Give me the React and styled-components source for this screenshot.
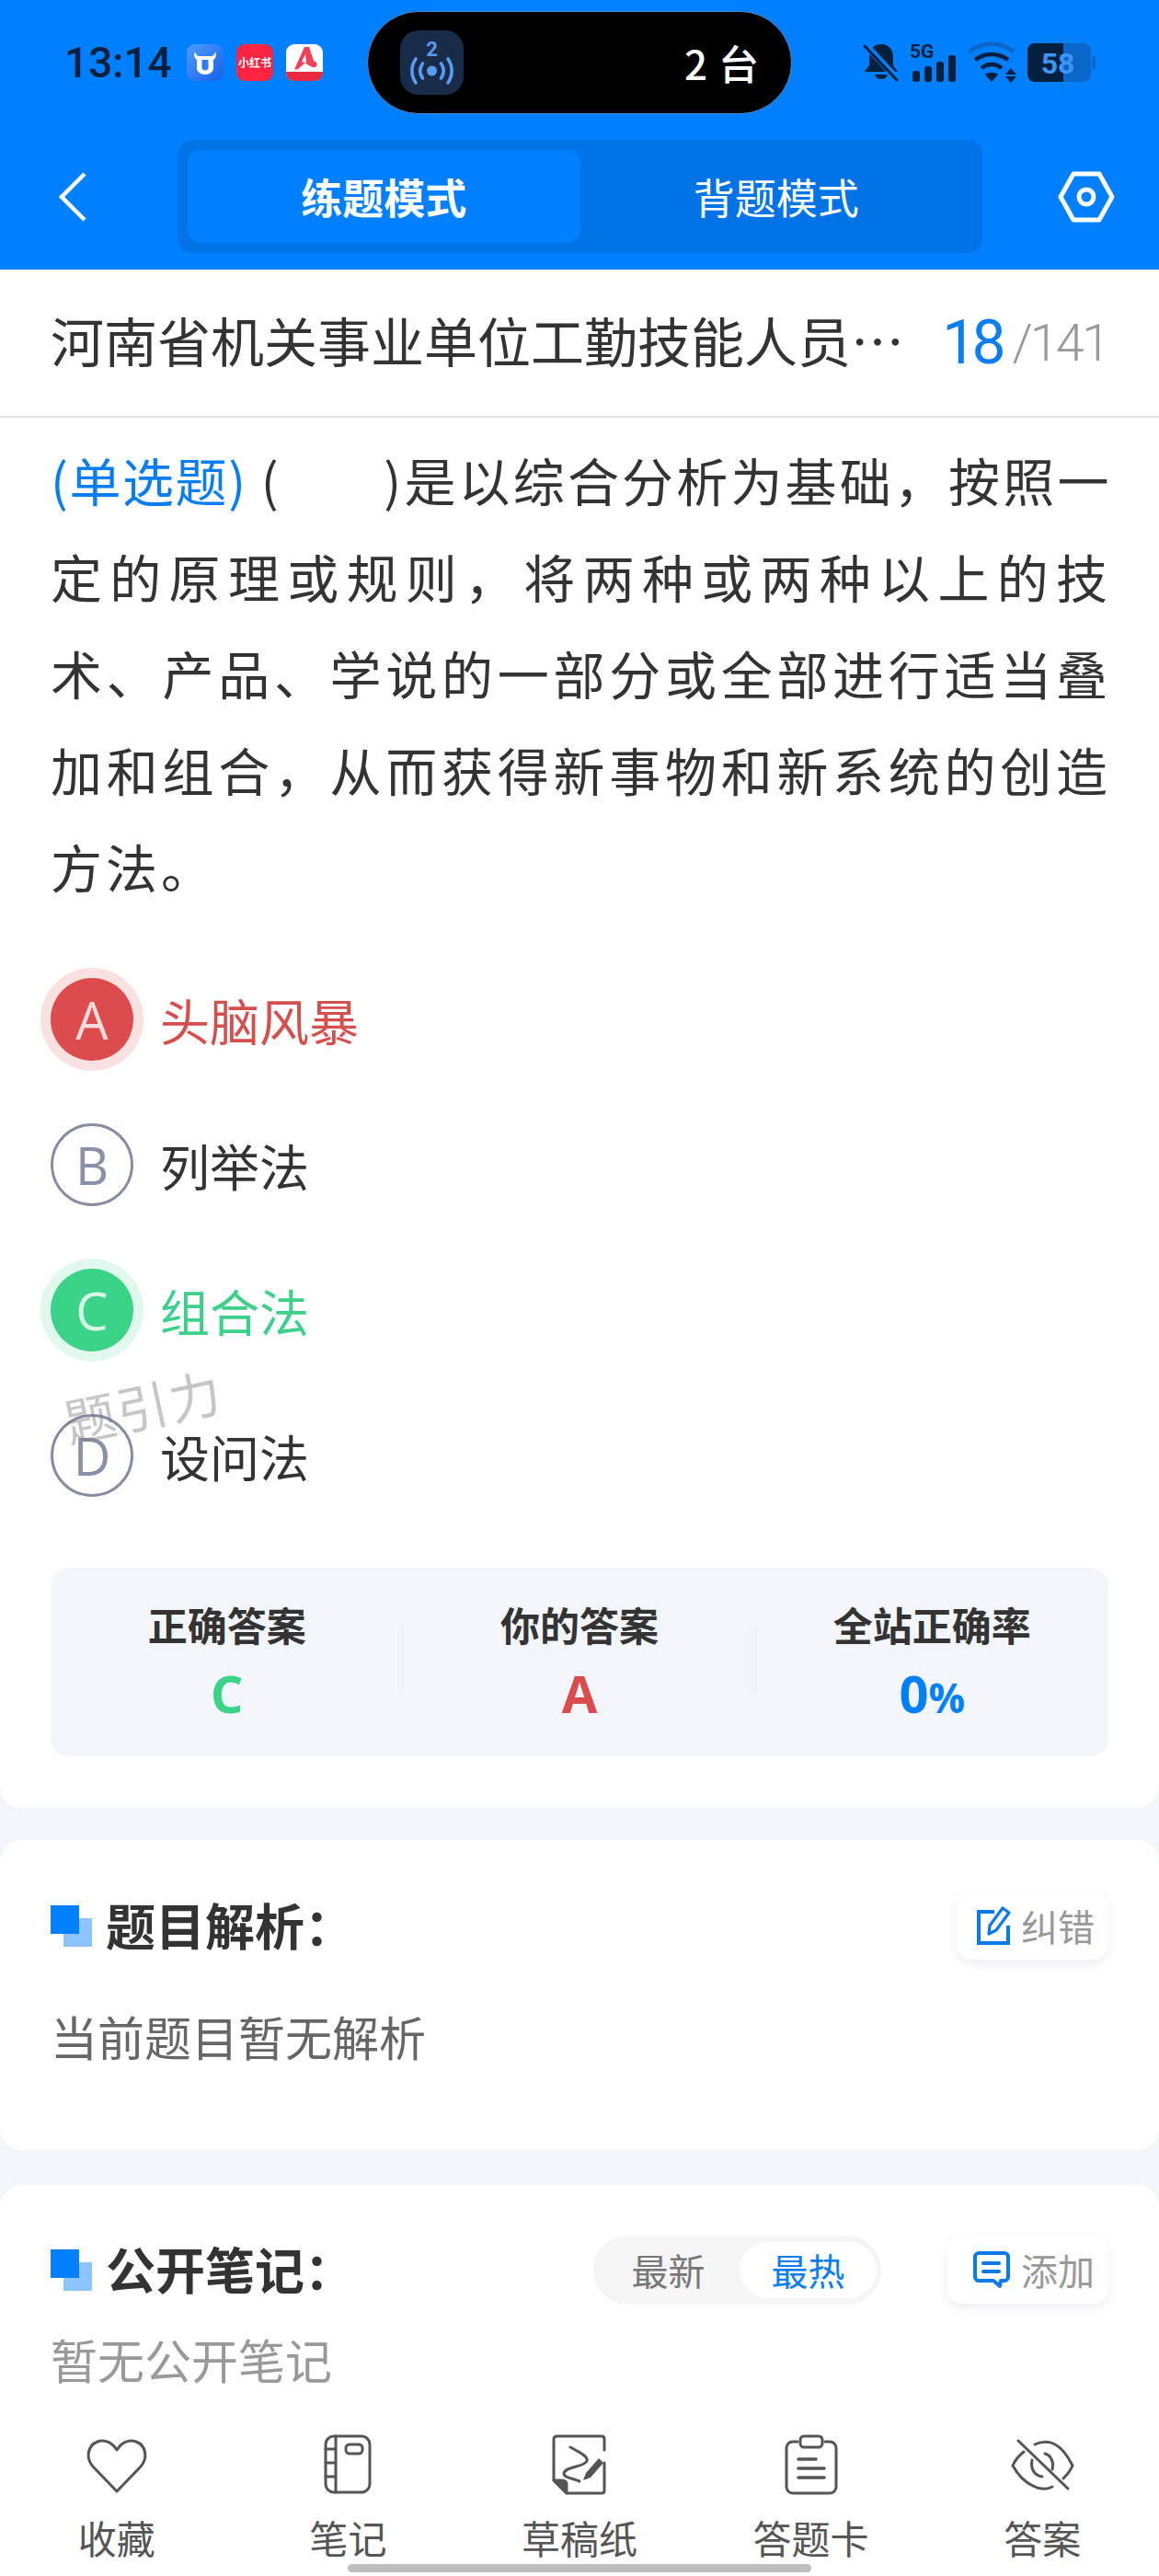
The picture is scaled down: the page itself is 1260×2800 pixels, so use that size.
import React from 'react';
import styled, { createGlobalStyle } from 'styled-components';

const CJK = `"Noto Sans CJK SC", "Noto Sans", sans-serif`;

const GlobalStyle = createGlobalStyle`
    html, body {
        margin: 0;
        padding: 0;
        background: #f2f5f9;
    }
    * {
        box-sizing: border-box;
    }
`;

const Page = styled.div`
    width: 1260px;
    height: 2800px;
    display: flex;
    flex-direction: column;
    position: relative;
    overflow: hidden;
    background: #f2f5f9;
    font-family: ${CJK};
    color: #333;
`;

const BlueHeader = styled.header`
    height: 293px;
    flex: none;
    background: #0080ff;
    display: flex;
    flex-direction: column;
`;

const StatusBar = styled.div`
    height: 137px;
    padding: 12px 66px 0 70px;
    display: flex;
    align-items: flex-start;
`;

const StatusLeft = styled.div`
    width: 329px;
    height: 112px;
    display: flex;
    align-items: center;
`;

const Time = styled.div`
    width: 133px;
    font-family: Roboto, sans-serif;
    font-size: 46px;
    font-weight: 500;
    color: #04203f;
    line-height: 1;
`;

const AppIcons = styled.div`
    display: flex;
    gap: 14px;
`;

const AppIcon = styled.svg`
    width: 40px;
    height: 40px;
    display: block;
`;

const Island = styled.div`
    width: 462px;
    height: 112px;
    flex: none;
    background: #000;
    border: 1px solid #4f89c6;
    border-radius: 56px;
    padding: 0 35px 0 35px;
    display: flex;
    align-items: center;
    justify-content: space-between;
`;

const IslandBadge = styled.svg`
    width: 69px;
    height: 70px;
    display: block;
`;

const IslandText = styled.div`
    font-size: 44px;
    font-weight: 500;
    color: #fff;
    line-height: 1;
    word-spacing: 2px;
`;

const StatusRight = styled.div`
    flex: 1;
    height: 112px;
    padding-left: 77px;
    display: flex;
    align-items: center;
`;

const StatusIcons = styled.svg`
    width: 255px;
    height: 48px;
    display: block;
    flex: none;
`;

const NavBar = styled.div`
    height: 123px;
    margin-top: 15px;
    padding: 0 49px 0 64px;
    display: flex;
    align-items: center;
`;

const BackIcon = styled.svg`
    width: 30px;
    height: 54px;
    flex: none;
    margin-right: 99px;
`;

const ModeSwitch = styled.div`
    width: 875px;
    height: 123px;
    flex: none;
    background: #0073e6;
    border-radius: 16px;
    padding: 11px;
    display: flex;
`;

const ModeTab = styled.div`
    flex: 1;
    border-radius: 14px;
    display: flex;
    align-items: center;
    justify-content: center;
    color: #fff;
    font-size: 45px;
    font-weight: ${(p) => (p.$active ? 700 : 400)};
    background: ${(p) => (p.$active ? '#0080ff' : 'transparent')};
`;

const SettingIcon = styled.svg`
    width: 62px;
    height: 56px;
    flex: none;
    margin-left: 82px;
`;

const Scroll = styled.main`
    flex: 1;
    min-height: 0;
    overflow: hidden;
`;

const QuestionCard = styled.section`
    height: 1672px;
    background: #fff;
    border-radius: 0 0 24px 24px;
    display: flex;
    flex-direction: column;
`;

const TitleRow = styled.div`
    height: 161px;
    flex: none;
    border-bottom: 2px solid #e2e2e2;
    padding: 0 56px 5px 55px;
    display: flex;
    align-items: center;
    justify-content: space-between;
`;

const PaperTitle = styled.div`
    font-size: 58px;
    line-height: 1.2;
    color: #333;
    white-space: nowrap;
`;

const Counter = styled.div`
    display: flex;
    align-items: center;
    margin-top: 6px;
    font-family: Roboto, sans-serif;
    line-height: 1;
`;

const CounterNow = styled.span`
    font-size: 66px;
    letter-spacing: -5px;
    color: #0a7df0;
`;

const CounterAll = styled.span`
    font-size: 56px;
    font-weight: 300;
    letter-spacing: -3px;
    color: #999;
    margin-left: 12px;
`;

const QuestionText = styled.div`
    padding: 14px 52px 0 55px;
    font-size: 56px;
    line-height: 105px;
    letter-spacing: 4px;
    color: #333;
`;

const QuestionLine = styled.div`
    text-align: justify;
    text-align-last: ${(p) => (p.$last ? 'left' : 'justify')};
    white-space: nowrap;
    letter-spacing: ${(p) => p.$tracking || 4}px;
`;

const TypeTag = styled.span`
    color: #0a7df0;
    letter-spacing: 1px;
`;

const Blank = styled.span`
    display: inline-block;
    width: 112px;
`;

const OptionList = styled.div`
    margin-top: 70px;
    padding-left: 55px;
    display: flex;
    flex-direction: column;
    gap: 68px;
    position: relative;
`;

const OptionRow = styled.div`
    height: 90px;
    display: flex;
    align-items: center;
    gap: 29px;
    font-size: 54px;
    color: ${(p) => p.$color || '#333'};
`;

const OptionBall = styled.div`
    width: 90px;
    height: 90px;
    border-radius: 50%;
    flex: none;
    display: flex;
    align-items: center;
    justify-content: center;
    font-family: "Open Sans", sans-serif;
    font-size: 56px;
    line-height: 1;
    color: ${(p) => (p.$fill ? p.$tint : '#8a90a6')};
    background: ${(p) => p.$fill || '#fff'};
    border: ${(p) => (p.$fill ? 'none' : '3px solid #878ca3')};
    box-shadow: ${(p) => (p.$fill ? `0 0 0 11px ${p.$ring}` : 'none')};
`;

const Watermark = styled.div`
    position: absolute;
    left: 68px;
    top: 430px;
    font-size: 56px;
    line-height: 1.2;
    letter-spacing: 2px;
    color: rgba(120, 120, 120, 0.42);
    transform: rotate(-12deg);
    pointer-events: none;
`;

const ResultBox = styled.div`
    margin: 77px 55px 0;
    height: 205px;
    background: #f2f5f9;
    border-radius: 20px;
    padding-top: 29px;
    display: flex;
`;

const ResultCell = styled.div`
    flex: 1;
    height: 110px;
    display: flex;
    flex-direction: column;
    align-items: center;
    position: relative;
    & + &::before {
        content: "";
        position: absolute;
        left: -1px;
        top: 35px;
        height: 73px;
        width: 1px;
        background: #e6e9ed;
    }
`;

const ResultLabel = styled.div`
    font-size: 43px;
    font-weight: 700;
    line-height: 64px;
    color: #333;
`;

const ResultValue = styled.div`
    margin-top: 11px;
    font-family: "Open Sans", sans-serif;
    font-size: 56px;
    font-weight: 700;
    line-height: 64px;
    color: ${(p) => p.$color};
`;

const ResultUnit = styled.span`
    font-size: 44px;
`;

const SectionCard = styled.section`
    margin-top: ${(p) => p.$gap}px;
    height: ${(p) => p.$height}px;
    background: #fff;
    border-radius: 24px;
    padding: ${(p) => p.$top}px 55px 0;
`;

const SectionHead = styled.div`
    height: 74px;
    display: flex;
    align-items: center;
`;

const SquareMark = styled.div`
    width: 45px;
    height: 45px;
    flex: none;
    background: linear-gradient(#0080ff, #0080ff) 0 0 / 31px 31px no-repeat,
        linear-gradient(#8cc4ff, #8cc4ff) 14px 14px / 31px 31px no-repeat;
`;

const SectionTitle = styled.h2`
    margin: -3px 0 0 15px;
    font-size: 54px;
    font-weight: 700;
    line-height: 1;
    color: #333;
    flex: 1;
`;

const GhostButton = styled.div`
    height: 73px;
    width: ${(p) => p.$width}px;
    flex: none;
    border-radius: 16px;
    background: #fff;
    box-shadow: 0 4px 12px rgba(40, 60, 90, 0.09);
    padding-right: 15px;
    display: flex;
    align-items: center;
    justify-content: flex-end;
    gap: ${(p) => p.$iconGap}px;
    font-size: 40px;
    color: #999;
`;

const ButtonIcon = styled.svg`
    width: 42px;
    height: 44px;
    flex: none;
`;

const SortSwitch = styled.div`
    width: 313px;
    height: 75px;
    margin-right: 72px;
    flex: none;
    border-radius: 38px;
    background: #f5f5f5;
    padding: 7px 5px 7px 4px;
    display: flex;
    align-items: center;
`;

const SortTab = styled.div`
    height: 61px;
    width: ${(p) => p.$width}px;
    border-radius: 31px;
    display: flex;
    align-items: center;
    justify-content: center;
    font-size: 40px;
    color: ${(p) => (p.$active ? '#0a7df0' : '#777')};
    background: ${(p) => (p.$active ? '#fff' : 'transparent')};
`;

const BodyText = styled.p`
    margin: ${(p) => p.$top}px 0 0 0;
    font-size: 51px;
    line-height: 72px;
    color: ${(p) => p.$color};
`;

const TabBar = styled.nav`
    height: 180px;
    flex: none;
    background: #fff;
    padding: 0 1px;
    display: grid;
    grid-template-columns: repeat(5, 1fr);
`;

const TabItem = styled.div`
    display: flex;
    flex-direction: column;
    align-items: center;
    padding-top: 24px;
    font-size: 42px;
    line-height: 60px;
    color: #555;
`;

const TabIcon = styled.svg`
    width: 70px;
    height: 70px;
    display: block;
    margin-bottom: 14px;
    fill: none;
    stroke: #555;
    stroke-width: 3;
    stroke-linecap: round;
    stroke-linejoin: round;
`;

const HomeBar = styled.div`
    position: absolute;
    left: 378px;
    bottom: 4px;
    width: 504px;
    height: 9px;
    border-radius: 5px;
    background: #bfbfbf;
`;

const CowIcon = () => (
    <AppIcon viewBox="0 0 40 40">
        <defs>
            <linearGradient id="cow" x1="0" y1="0" x2="1" y2="1">
                <stop offset="0" stopColor="#4f9bff" />
                <stop offset="1" stopColor="#1660e8" />
            </linearGradient>
        </defs>
        <rect width="40" height="40" rx="9" fill="url(#cow)" />
        <path d="M9 8c.5 3 2 4.500 4 5h14c2-.5 3.500-2 4-5 1.500 3.500 1 7-2 9v9c0 4-4 7-9 7s-9-3-9-7v-9c-3-2-3.500-5.500-2-9z" fill="#fff" />
        <path d="M16.500 17h7v9c0 1.500-1.500 2.500-3.500 2.500s-3.500-1-3.500-2.500z" fill="#2f7df2" />
    </AppIcon>
);

const RedBookIcon = () => (
    <AppIcon viewBox="0 0 40 40">
        <rect width="40" height="40" rx="9" fill="#ff2442" />
        <text x="20" y="25" textAnchor="middle" fontSize="12" fontWeight="700" fill="#fff" fontFamily={CJK}>小红书</text>
    </AppIcon>
);

const RedAppIcon = () => (
    <AppIcon viewBox="0 0 40 40">
        <rect width="40" height="40" rx="9" fill="#fff" />
        <path d="M0 30h40v1c0 5-4 9-9 9H9c-5 0-9-4-9-9z" fill="#e8283f" />
        <path d="M20 3h5l5 15c3 1 4 3 3.500 5s-3 3-6 1.500l-7-4-8 7H9z" fill="#ee4258" />
        <path d="M21 11l-4 8 5 1.500z" fill="#fff" />
    </AppIcon>
);

const BroadcastBadge = () => (
    <IslandBadge viewBox="0 0 69 70">
        <rect width="69" height="70" rx="20" fill="#182c49" />
        <text x="34.500" y="28" textAnchor="middle" fontSize="22" fontWeight="700" fill="#5a9bf0" fontFamily="Roboto, sans-serif">2</text>
        <circle cx="34.500" cy="44" r="5.500" fill="#5a9bf0" />
        <g fill="none" stroke="#5a9bf0" strokeWidth="3.600" strokeLinecap="round">
            <path d="M24.500 36c-3.500 5-3.500 11 0 16" />
            <path d="M44.500 36c3.500 5 3.500 11 0 16" />
            <path d="M17 31c-5.500 8-5.500 18 0 26" />
            <path d="M52 31c5.500 8 5.500 18 0 26" />
        </g>
    </IslandBadge>
);

// bell, 5G bars, wifi, battery: one strip, same colour
const StatusStrip = () => (
    <StatusIcons viewBox="0 0 255 48">
        <g fill="#04203f">
            <path d="M20 4c8 0 13 6 13 14v9l5 7H2l5-7v-9C7 10 12 4 20 4z" />
            <path d="M13 37h14c-1 3.500-3.500 5-7 5s-6-1.500-7-5z" />
        </g>
        <path d="M3 5l34 36" stroke="#0080ff" strokeWidth="7" />
        <path d="M2 6l35 37" stroke="#04203f" strokeWidth="3" strokeLinecap="round" fill="none" />
        <text x="51" y="19" fontSize="21" fontWeight="700" fill="#04203f" fontFamily="Roboto, sans-serif">5G</text>
        <g fill="#04203f">
            <rect x="54" y="33" width="8" height="12" rx="3" />
            <rect x="67" y="28" width="8" height="17" rx="3" />
            <rect x="80" y="23" width="8" height="22" rx="3" />
            <rect x="93" y="16" width="8" height="29" rx="3" />
        </g>
        <g fill="none" strokeLinecap="butt">
            <path d="M116 12c14-11 34-11 48 0" stroke="#0a66c8" strokeWidth="4.500" />
            <path d="M122 21c11-8 25-8 36 0" stroke="#04203f" strokeWidth="4.500" />
            <path d="M129 30c7-5 15-5 22 0" stroke="#04203f" strokeWidth="4.500" />
        </g>
        <g fill="#04203f">
            <path d="M140 45l-7-8c4-3 10-3 14 0z" />
            <path d="M161 30l6 7h-12z" />
            <path d="M161 46l6-7h-12z" />
        </g>
        <rect x="179" y="3" width="69" height="42" rx="8" fill="#0a66c8" />
        <rect x="249" y="17" width="4" height="14" rx="2" fill="#0a66c8" />
        <path d="M187 3h31v42h-31a8 8 0 0 1-8-8V11a8 8 0 0 1 8-8z" fill="#04203f" />
        <text x="212" y="36" textAnchor="middle" fontSize="32" fontWeight="700" fill="#3d96f5" fontFamily="Roboto, sans-serif">58</text>
    </StatusIcons>
);

const EditIcon = () => (
    <ButtonIcon viewBox="0 0 42 44" fill="none" stroke="#0c7ae6" strokeWidth="4">
        <path d="M20 7H3v34h32V22" />
        <path d="M14 31l1-9L29 3l7 5-14 19z" strokeWidth="3.200" strokeLinejoin="round" />
    </ButtonIcon>
);

const CommentIcon = () => (
    <ButtonIcon viewBox="0 0 42 44" fill="none" stroke="#0c7ae6" strokeWidth="4" strokeLinecap="round">
        <path d="M8 4h28c2 0 4 2 4 4v22c0 2-2 4-4 4h-4l-1 6-7-6H8c-2 0-4-2-4-4V8c0-2 2-4 4-4z" strokeLinejoin="round" />
        <path d="M13 15h17M13 24h17" />
    </ButtonIcon>
);

const tabs = [
    {
        label: '收藏',
        icon: <path d="M35 64L9 37C1 28 3 14 14 10c8-3 16 1 21 9 5-8 13-12 21-9 11 4 13 18 5 27z" />,
    },
    {
        label: '笔记',
        icon: (
            <>
                <rect x="11" y="4" width="48" height="61" rx="9" />
                <path d="M22 4v61M11 18h11M11 33h11M11 48h11" />
                <rect x="33" y="13" width="18" height="10" rx="4" />
            </>
        ),
    },
    {
        label: '草稿纸',
        icon: (
            <>
                <path d="M62 19V7c0-2-1-3-3-3H11C9 4 7 5 7 7v45l14 14h38c2 0 3-1 3-3V33" />
                <path d="M7 52h9c3 0 5 2 5 4v10z" fill="#555" />
                <path d="M25 16c9 5 20 10 18 15-3 7-25 6-25 14 0 4 10 5 17 8" />
                <path d="M39 52l3-8 14-16 5 5-14 16z" fill="#555" stroke="none" />
            </>
        ),
    },
    {
        label: '答题卡',
        icon: (
            <>
                <path d="M20 10h-5c-4 0-7 3-7 7v42c0 4 3 7 7 7h40c4 0 7-3 7-7V17c0-4-3-7-7-7h-5" />
                <rect x="23" y="4" width="24" height="12" rx="4" />
                <path d="M21 29h19M21 39h28M21 49h28" strokeWidth="3.600" />
            </>
        ),
    },
    {
        label: '答案',
        icon: (
            <>
                <path d="M27 13c6-3 15-4 22 0 8 4 14 13 19 23-2 5-6 10-10 14M46 59c-6 3-14 3-21-1-9-4-17-13-22-22 2-5 7-11 12-15" />
                <path d="M38 23c7 2 10 10 8 17M35 48c-8-1-13-8-11-18" />
                <path d="M9 9l54 52" />
            </>
        ),
    },
];

const App = () => {
    return (
        <Page>
            <GlobalStyle />
            <BlueHeader>
                <StatusBar>
                    <StatusLeft>
                        <Time>13:14</Time>
                        <AppIcons>
                            <CowIcon />
                            <RedBookIcon />
                            <RedAppIcon />
                        </AppIcons>
                    </StatusLeft>
                    <Island>
                        <BroadcastBadge />
                        <IslandText>2 台</IslandText>
                    </Island>
                    <StatusRight>
                        <StatusStrip />
                    </StatusRight>
                </StatusBar>
                <NavBar>
                    <BackIcon viewBox="0 0 30 54" fill="none" stroke="#fff" strokeWidth="4.500">
                        <path d="M28 2L3 27l25 25" />
                    </BackIcon>
                    <ModeSwitch>
                        <ModeTab $active>练题模式</ModeTab>
                        <ModeTab>背题模式</ModeTab>
                    </ModeSwitch>
                    <SettingIcon viewBox="0 0 62 56" fill="none" stroke="#fff" strokeWidth="5">
                        <path d="M17 3h28l14 25-14 25H17L3 28z" strokeLinejoin="round" />
                        <circle cx="31" cy="28" r="8" />
                    </SettingIcon>
                </NavBar>
            </BlueHeader>
            <Scroll>
                <QuestionCard>
                    <TitleRow>
                        <PaperTitle>河南省机关事业单位工勤技能人员…</PaperTitle>
                        <Counter>
                            <CounterNow>18</CounterNow>
                            <CounterAll>/141</CounterAll>
                        </Counter>
                    </TitleRow>
                    <QuestionText>
                        <QuestionLine $tracking={2.6}><TypeTag>(单选题)</TypeTag> (<Blank />)是以综合分析为基础，按照一</QuestionLine>
                        <QuestionLine>定的原理或规则，将两种或两种以上的技</QuestionLine>
                        <QuestionLine>术、产品、学说的一部分或全部进行适当叠</QuestionLine>
                        <QuestionLine>加和组合，从而获得新事物和新系统的创造</QuestionLine>
                        <QuestionLine $last>方法。</QuestionLine>
                    </QuestionText>
                    <OptionList>
                        <OptionRow $color="#d64f4f">
                            <OptionBall $fill="#dc4c4c" $ring="#fae1e1" $tint="#fbdcdc">A</OptionBall>
                            头脑风暴
                        </OptionRow>
                        <OptionRow>
                            <OptionBall>B</OptionBall>
                            列举法
                        </OptionRow>
                        <OptionRow $color="#3ed08a">
                            <OptionBall $fill="#3bd388" $ring="#e1f8ec" $tint="#d8f7e7">C</OptionBall>
                            组合法
                        </OptionRow>
                        <OptionRow>
                            <OptionBall>D</OptionBall>
                            设问法
                        </OptionRow>
                        <Watermark>题引力</Watermark>
                    </OptionList>
                    <ResultBox>
                        <ResultCell>
                            <ResultLabel>正确答案</ResultLabel>
                            <ResultValue $color="#3bd388">C</ResultValue>
                        </ResultCell>
                        <ResultCell>
                            <ResultLabel>你的答案</ResultLabel>
                            <ResultValue $color="#dc4c4c">A</ResultValue>
                        </ResultCell>
                        <ResultCell>
                            <ResultLabel>全站正确率</ResultLabel>
                            <ResultValue $color="#0080ff">0<ResultUnit>%</ResultUnit></ResultValue>
                        </ResultCell>
                    </ResultBox>
                </QuestionCard>
                <SectionCard $gap={35} $height={337} $top={56}>
                    <SectionHead>
                        <SquareMark />
                        <SectionTitle>题目解析：</SectionTitle>
                        <GhostButton $width={165} $iconGap={7}>
                            <EditIcon />
                            纠错
                        </GhostButton>
                    </SectionHead>
                    <BodyText $top={47} $color="#666">当前题目暂无解析</BodyText>
                </SectionCard>
                <SectionCard $gap={38} $height={400} $top={55}>
                    <SectionHead>
                        <SquareMark />
                        <SectionTitle>公开笔记：</SectionTitle>
                        <SortSwitch>
                            <SortTab $width={155}>最新</SortTab>
                            <SortTab $width={149} $active>最热</SortTab>
                        </SortSwitch>
                        <GhostButton $width={175} $iconGap={12}>
                            <CommentIcon />
                            添加
                        </GhostButton>
                    </SectionHead>
                    <BodyText $top={24} $color="#999">暂无公开笔记</BodyText>
                </SectionCard>
            </Scroll>
            <TabBar>
                {tabs.map((tab) => (
                    <TabItem key={tab.label}>
                        <TabIcon viewBox="0 0 70 70">{tab.icon}</TabIcon>
                        {tab.label}
                    </TabItem>
                ))}
            </TabBar>
            <HomeBar />
        </Page>
    );
};

export default App;
